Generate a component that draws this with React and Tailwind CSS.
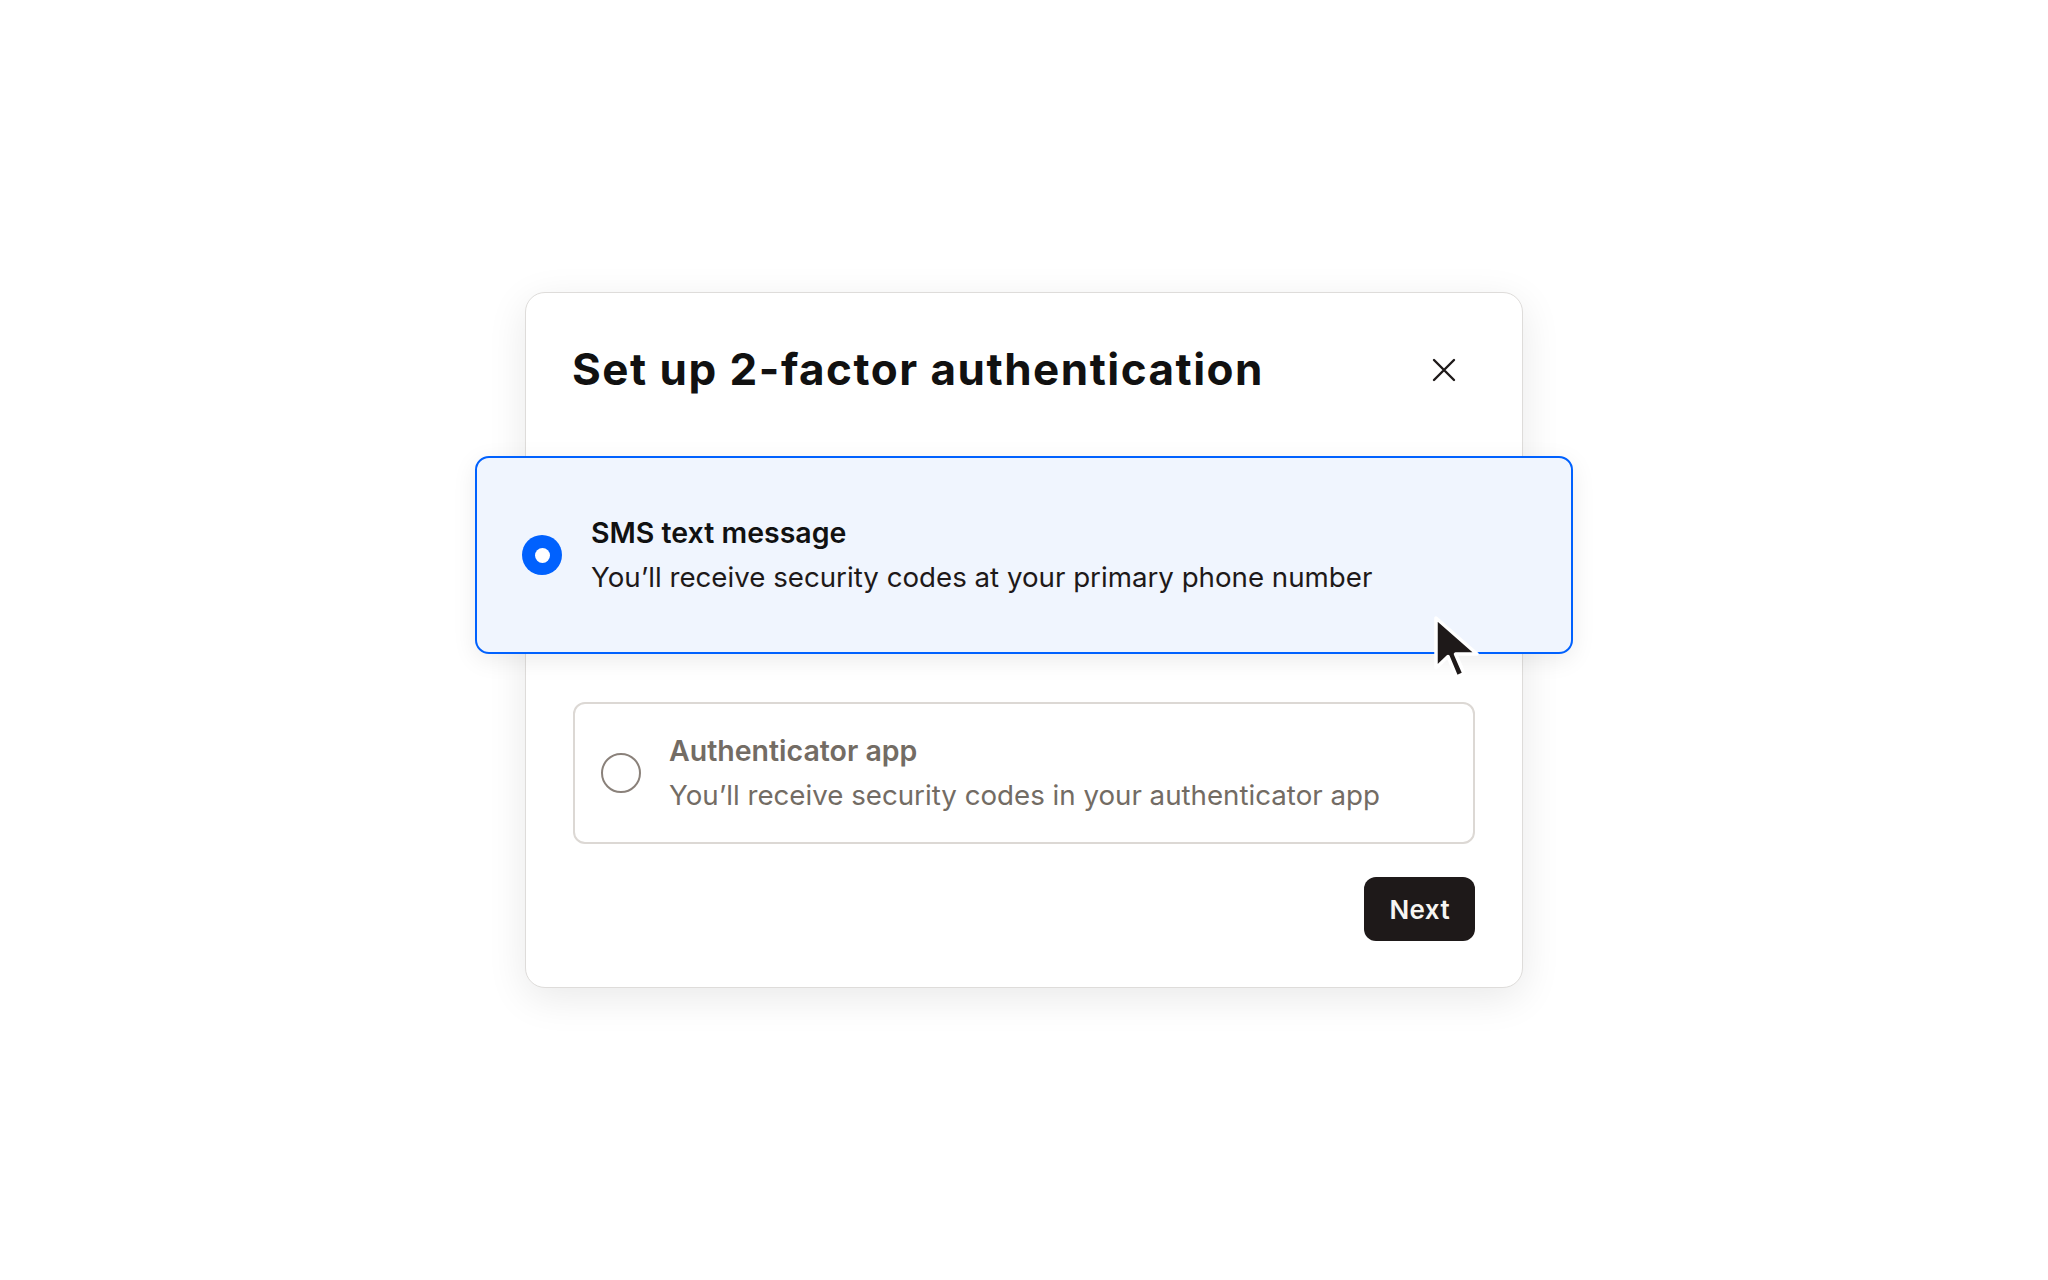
import React from "react";

function Cursor() {
  return (
    <svg width="48" height="68" viewBox="0 0 48 68" className="absolute left-[956px] top-[157px]">
      <path
        d="M3 3 L3 53 L15 41.5 L23.5 62 L31 58.5 L22.5 39 L44 39 Z"
        fill="#1e1919"
        stroke="#ffffff"
        strokeWidth="3.5"
        strokeLinejoin="round"
      />
    </svg>
  );
}

export default function App() {
  return (
    <div
      className="min-h-screen w-full flex items-center justify-center bg-white"
      style={{ fontFamily: "Inter, 'Noto Sans', 'Liberation Sans', sans-serif" }}
    >
      <div className="w-[998px] rounded-[20px] border border-[#dedcda] bg-white shadow-[0_10px_40px_rgba(0,0,0,0.09)] px-[47px] pt-[51px] pb-[46px]">
        <div className="flex items-center justify-between h-[50px]">
          <h1 className="-ml-[1px] text-[44px] leading-[50px] font-bold tracking-[1.5px] text-[#111]">
            Set up 2-factor authentication
          </h1>
          <button className="mr-[19px] w-[24px] h-[24px] flex items-center justify-center mt-[2px]">
            <svg width="24" height="24" viewBox="0 0 24 24">
              <path d="M2 2 L22 22 M22 2 L2 22" stroke="#1e1919" strokeWidth="2.4" strokeLinecap="round" />
            </svg>
          </button>
        </div>

        <div className="relative -mx-[98px] mt-[62px] h-[198px] rounded-[14px] border-2 border-[#0061fe] bg-[#f0f5fe] shadow-[0_6px_24px_rgba(0,0,0,0.08)] flex items-center pl-[45px]">
          <div className="w-[40px] h-[40px] rounded-full bg-[#0061fe] flex items-center justify-center shrink-0">
            <div className="w-[15px] h-[15px] rounded-full bg-white" />
          </div>
          <div className="ml-[29px] flex flex-col gap-2">
            <div className="text-[28.5px] leading-[36px] font-semibold text-[#111]">SMS text message</div>
            <div className="text-[27.7px] leading-[36px] text-[#1e1919]">
              You’ll receive security codes at your primary phone number
            </div>
          </div>
          <Cursor />
        </div>

        <div className="mt-[48px] h-[142px] rounded-[12px] border-2 border-[#dcd8d4] bg-white flex items-center pl-[26px]">
          <div className="w-[40px] h-[40px] rounded-full border-2 border-[#8a817a] shrink-0" />
          <div className="ml-[28px] flex flex-col gap-2">
            <div className="text-[28.5px] leading-[36px] font-semibold text-[#736c64]">Authenticator app</div>
            <div className="text-[27.7px] leading-[36px] text-[#736c64]">
              You’ll receive security codes in your authenticator app
            </div>
          </div>
        </div>

        <div className="mt-[33px] flex justify-end">
          <button className="h-[64px] px-[25px] rounded-[12px] bg-[#1e1919] text-[#f7f5f2] text-[26px] font-semibold tracking-[0.4px]">
            Next
          </button>
        </div>
      </div>
    </div>
  );
}
